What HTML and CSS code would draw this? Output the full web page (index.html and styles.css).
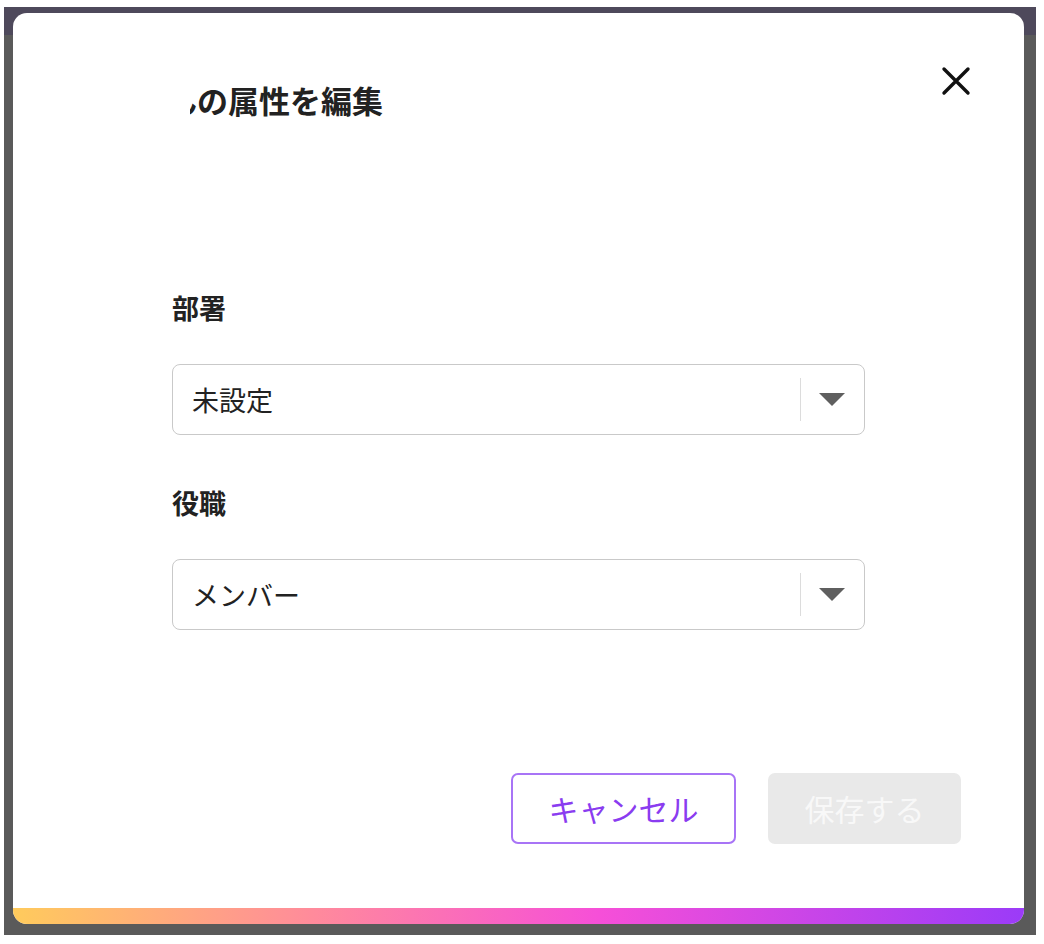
FILE: index.html
```html
<!DOCTYPE html>
<html lang="ja">
<head>
  <meta charset="UTF-8" />
  <title>メンバーの属性を編集</title>
  <link rel="stylesheet" href="styles.css">
</head>
<body>
  <div class="backdrop">
    <div class="modal">
      <header class="modal-header">
        <div class="title-clip">
          <h1 class="title">さんの属性を編集</h1>
        </div>
        <button class="close-button" aria-label="閉じる">
          <svg width="30" height="30" viewBox="0 0 30 30">
            <path d="M3 3 L27 27 M27 3 L3 27" stroke="#111" stroke-width="3.4" stroke-linecap="round" fill="none"/>
          </svg>
        </button>
      </header>

      <div class="modal-body">
        <div class="field">
          <label class="field-label">部署</label>
          <div class="select">
            <span class="select-value">未設定</span>
            <span class="select-divider"></span>
            <span class="select-arrow"></span>
          </div>
        </div>
        <div class="field">
          <label class="field-label">役職</label>
          <div class="select">
            <span class="select-value">メンバー</span>
            <span class="select-divider"></span>
            <span class="select-arrow"></span>
          </div>
        </div>
      </div>

      <footer class="modal-footer">
        <button class="btn btn-outline">キャンセル</button>
        <button class="btn btn-disabled" disabled>保存する</button>
      </footer>

      <div class="modal-bar"></div>
    </div>
  </div>
</body>
</html>
```

FILE: styles.css
```css
body {
    margin: 0;
    background: #ffffff;
    font-family: "Noto Sans CJK JP", "Noto Sans", sans-serif;
    color: #222;
}
.backdrop {
    margin: 7px 8px 0 4px;
    height: 928px;
    background: linear-gradient(#4e495b 0, #4e495b 28px, #5a5a5a 28px);
    overflow: hidden;
}
.modal {
    margin: 6px 0 0 9px;
    width: 1011px;
    height: 911px;
    background: #ffffff;
    border-radius: 14px;
    overflow: hidden;
    display: flex;
    flex-direction: column;
}
.modal-header {
    display: flex;
    justify-content: space-between;
    align-items: flex-start;
    padding: 53px 53px 0 177px;
}
.title-clip {
    overflow: hidden;
    margin-top: 14px;
}
.title {
    margin: 0 0 0 -55px;
    font-size: 31px;
    line-height: 40px;
    font-weight: 700;
    color: #222;
    white-space: nowrap;
}
.close-button {
    background: none;
    border: none;
    padding: 0;
    width: 30px;
    height: 30px;
    cursor: pointer;
}
.close-button svg {
    display: block;
}
.modal-body {
    padding: 170px 159px 0 159px;
}
.field + .field {
    margin-top: 50px;
}
.field-label {
    display: block;
    font-size: 27px;
    line-height: 36px;
    font-weight: 700;
    color: #222;
}
.select {
    margin-top: 38px;
    height: 71px;
    box-sizing: border-box;
    border: 1px solid #c9c9c9;
    border-radius: 8px;
    display: flex;
    align-items: center;
    padding: 0 19px 0 19px;
}
.select-value {
    flex: 1;
    font-size: 27px;
    color: #222;
}
.select-divider {
    width: 1px;
    height: 43px;
    background: #dcdcdc;
    margin-right: 18px;
}
.select-arrow {
    width: 0;
    height: 0;
    border-left: 13.5px solid transparent;
    border-right: 13.5px solid transparent;
    border-top: 13px solid #5f5f5f;
}
.modal-footer {
    margin-top: auto;
    display: flex;
    justify-content: flex-end;
    gap: 32px;
    padding: 0 63px 64px 0;
}
.btn {
    height: 71px;
    border-radius: 7px;
    font-family: "Noto Sans CJK JP", "Noto Sans", sans-serif;
    font-size: 30px;
    box-sizing: border-box;
    padding: 0;
    cursor: pointer;
}
.btn-outline {
    width: 225px;
    background: #ffffff;
    border: 2px solid #a874f6;
    color: #8a3cf0;
    padding-bottom: 2px;
}
.btn-disabled {
    width: 193px;
    background: #e9e9e9;
    border: none;
    color: #f8f8f8;
    cursor: default;
    padding-bottom: 2px;
}
.modal-bar {
    height: 16px;
    flex-shrink: 0;
    background: linear-gradient(90deg, #ffcb5c 0%, #ff8a9c 30%, #f64fd8 58%, #9b3bf8 100%);
}
```
